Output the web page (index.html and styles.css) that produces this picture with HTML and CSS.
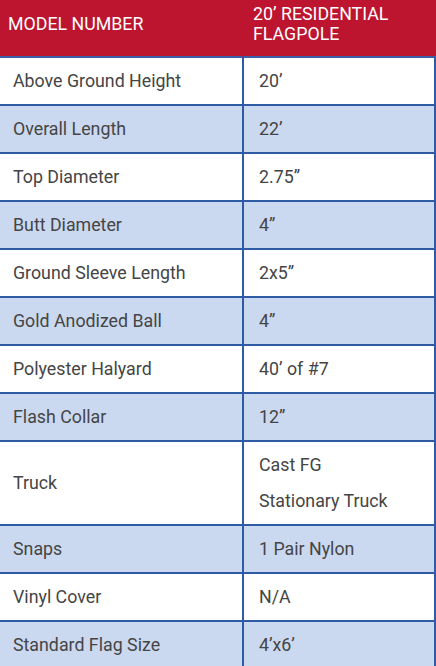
FILE: index.html
```html
<!DOCTYPE html>
<html>
<head>
<meta charset="utf-8">
<link rel="stylesheet" href="styles.css">
</head>
<body>
<table class="spec">
  <thead>
    <tr>
      <th class="h1">MODEL NUMBER</th>
      <th class="h2">20’ RESIDENTIAL FLAGPOLE</th>
    </tr>
  </thead>
  <tbody>
    <tr><td>Above Ground Height</td><td>20’</td></tr>
    <tr class="alt"><td>Overall Length</td><td>22’</td></tr>
    <tr><td>Top Diameter</td><td>2.75”</td></tr>
    <tr class="alt"><td>Butt Diameter</td><td>4”</td></tr>
    <tr><td>Ground Sleeve Length</td><td>2x5”</td></tr>
    <tr class="alt"><td>Gold Anodized Ball</td><td>4”</td></tr>
    <tr><td>Polyester Halyard</td><td>40’ of #7</td></tr>
    <tr class="alt"><td>Flash Collar</td><td>12”</td></tr>
    <tr class="tall"><td>Truck</td><td class="multi">Cast FG<br>Stationary Truck</td></tr>
    <tr class="alt"><td>Snaps</td><td>1 Pair Nylon</td></tr>
    <tr><td>Vinyl Cover</td><td>N/A</td></tr>
    <tr class="alt"><td>Standard Flag Size</td><td>4’x6’</td></tr>
  </tbody>
</table>
</body>
</html>
```

FILE: styles.css
```css
html, body {
  margin: 0;
  padding: 0;
  background: #ffffff;
}
body {
  font-family: Roboto, "Liberation Sans", Arial, sans-serif;
  width: 436px;
  overflow: hidden;
}
.spec {
  width: 436px;
  border-collapse: separate;
  border-spacing: 0;
  table-layout: fixed;
}
.spec th {
  background: #bd1430;
  color: #ffffff;
  font-weight: 400;
  font-size: 17.8px;
  line-height: 20px;
  text-align: left;
  height: 48px;
  padding: 0 8px 8px 8px;
  vertical-align: middle;
  border-bottom: 2px solid #3a5fa8;
}
.spec th.h1 {
  width: 226px;
  border-right: 2px solid #bd1430;
}
.spec th.h2 {
  padding-left: 9px;
  padding-right: 20px;
}
.spec td {
  height: 46px;
  padding: 0 13px;
  font-size: 17.8px;
  line-height: 20px;
  color: #454545;
  vertical-align: middle;
  border-bottom: 2px solid #2f5aa6;
  background: #ffffff;
}
.spec td:first-child {
  border-right: 2px solid #2f5aa6;
}
.spec td:last-child {
  padding-left: 15px;
  border-right: 2px solid #2f5aa6;
}
.spec tr.alt td {
  background: #cbd9f0;
}
.spec tr.tall td {
  height: 82px;
}
.spec td.multi {
  line-height: 36px;
}
```
